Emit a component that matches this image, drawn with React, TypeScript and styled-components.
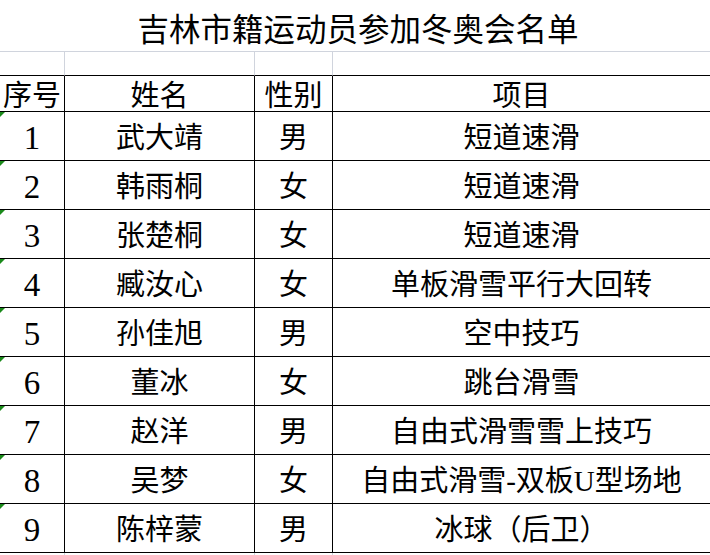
import React from "react";
import styled, { createGlobalStyle } from "styled-components";

const GlobalStyle = createGlobalStyle`
  html, body {
    margin: 0;
    padding: 0;
    background: #fff;
    overflow: hidden;
  }
`;

const COLS = "65px 190px 78px 378px";
const GRID = "#d0d4dd";

const Sheet = styled.div`
  width: 711px;
  height: 555px;
  overflow: hidden;
  font-family: "Liberation Serif", "Noto Sans CJK SC", serif;
  color: #000;
`;

// merged title cell
const Title = styled.div`
  height: 52px;
  box-sizing: border-box;
  border-bottom: 1px solid ${GRID};
  display: flex;
  align-items: center;
  justify-content: center;
  padding: 11px 0 0 5px;
  font-size: 31.5px;
  line-height: 1;
`;

const Row = styled.div<{ $h: number }>`
  display: grid;
  grid-template-columns: ${COLS};
  height: ${(p) => p.$h}px;
`;

const Cell = styled.div<{ $line?: "black" | "gray"; $bottom?: "black" | "gray" | "none" }>`
  position: relative;
  box-sizing: border-box;
  border-right: 1px solid ${(p) => (p.$line === "gray" ? GRID : "#000")};
  border-bottom: ${(p) =>
    p.$bottom === "none" ? "0" : `1px solid ${p.$bottom === "gray" ? GRID : "#000"}`};
  display: flex;
  align-items: center;
  justify-content: center;
  padding-top: 5px;
  font-size: 29px;
  line-height: 1;
  white-space: nowrap;
`;

const Num = styled.span`
  font-size: 33px;
`;

// small green "number stored as text" flag
const Flag = styled.span`
  position: absolute;
  top: 0;
  left: 0;
  width: 0;
  height: 0;
  border-top: 5px solid #1a8a1a;
  border-right: 5px solid transparent;
`;

const athletes = [
  { no: "1", name: "武大靖", sex: "男", event: "短道速滑" },
  { no: "2", name: "韩雨桐", sex: "女", event: "短道速滑" },
  { no: "3", name: "张楚桐", sex: "女", event: "短道速滑" },
  { no: "4", name: "臧汝心", sex: "女", event: "单板滑雪平行大回转" },
  { no: "5", name: "孙佳旭", sex: "男", event: "空中技巧" },
  { no: "6", name: "董冰", sex: "女", event: "跳台滑雪" },
  { no: "7", name: "赵洋", sex: "男", event: "自由式滑雪雪上技巧" },
  { no: "8", name: "吴梦", sex: "女", event: "自由式滑雪-双板U型场地" },
  { no: "9", name: "陈梓蒙", sex: "男", event: "冰球（后卫）" },
];

const App: React.FC = () => {
  return (
    <>
      <GlobalStyle />
      <Sheet>
        <Title>吉林市籍运动员参加冬奥会名单</Title>

        {/* empty spacer row */}
        <Row $h={24}>
          {[0, 1, 2, 3].map((i) => (
            <Cell key={i} $line="gray" />
          ))}
        </Row>

        {/* header */}
        <Row $h={36}>
          <Cell>序号</Cell>
          <Cell>姓名</Cell>
          <Cell>性别</Cell>
          <Cell>项目</Cell>
        </Row>

        {athletes.map((a) => (
          <Row $h={49} key={a.no}>
            <Cell>
              <Flag />
              <Num>{a.no}</Num>
            </Cell>
            <Cell>{a.name}</Cell>
            <Cell>{a.sex}</Cell>
            <Cell>{a.event}</Cell>
          </Row>
        ))}

        {/* next empty row peeking in */}
        <Row $h={20}>
          {[0, 1, 2, 3].map((i) => (
            <Cell key={i} $line="gray" $bottom="none" />
          ))}
        </Row>
      </Sheet>
    </>
  );
};

export default App;
